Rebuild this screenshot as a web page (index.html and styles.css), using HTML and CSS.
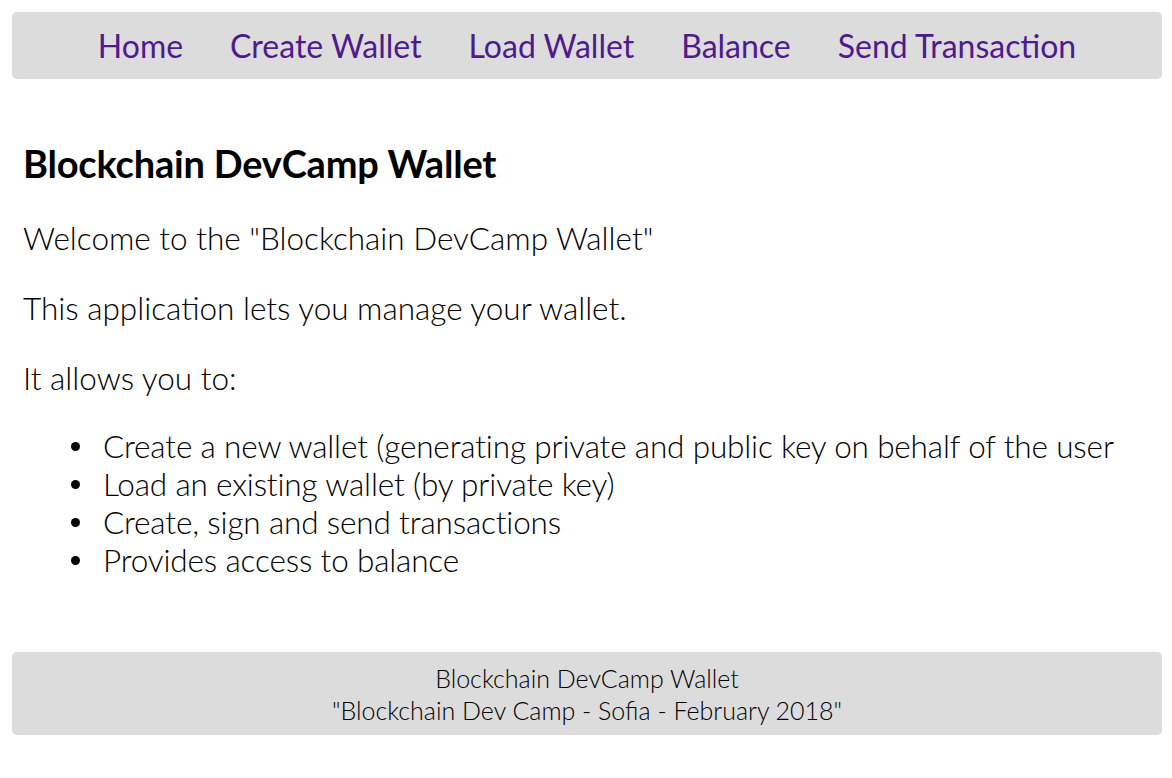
FILE: index.html
```html
<!DOCTYPE html>
<html>
<head>
<meta charset="utf-8">
<link rel="stylesheet" href="styles.css">
</head>
<body>
<nav class="nav">
  <a class="nav-link" href="#">Home</a>
  <a class="nav-link" href="#">Create Wallet</a>
  <a class="nav-link" href="#">Load Wallet</a>
  <a class="nav-link" href="#">Balance</a>
  <a class="nav-link" href="#">Send Transaction</a>
</nav>
<main class="content">
  <h1 class="title">Blockchain DevCamp Wallet</h1>
  <p class="text">Welcome to the "Blockchain DevCamp Wallet"</p>
  <p class="text">This application lets you manage your wallet.</p>
  <p class="text">It allows you to:</p>
  <ul class="list">
    <li class="item">Create a new wallet (generating private and public key on behalf of the user</li>
    <li class="item">Load an existing wallet (by private key)</li>
    <li class="item">Create, sign and send transactions</li>
    <li class="item">Provides access to balance</li>
  </ul>
</main>
<footer class="footer">
  <div>Blockchain DevCamp Wallet</div>
  <div>"Blockchain Dev Camp - Sofia - February 2018"</div>
</footer>
</body>
</html>
```
FILE: styles.css
```css
html, body {
  margin: 0;
  padding: 0;
  background: #fff;
}
body {
  padding: 12px 10px 0 12px;
  font-family: Lato, "Liberation Sans", sans-serif;
  color: #000;
}
.nav {
  background: #dcdcdc;
  border-radius: 5px;
  height: 67px;
  display: flex;
  justify-content: center;
  align-items: center;
  gap: 47px;
}
.nav-link {
  color: #4e1a8c;
  text-decoration: none;
  font-size: 32px;
  font-weight: 400;
}
.content {
  padding: 0 11px;
}
.title {
  font-size: 38px;
  font-weight: 700;
  margin: 62px 0 0 0;
  line-height: 44px;
  letter-spacing: -0.2px;
}
.text {
  font-size: 31.5px;
  font-weight: 300;
  line-height: 38px;
  margin: 32px 0 0 0;
}
.title + .text {
  margin-top: 34px;
}
.list {
  font-size: 31.5px;
  font-weight: 300;
  line-height: 38px;
  margin: 30px 0 0 0;
  padding-left: 80px;
  list-style: none;
}
.item {
  letter-spacing: -0.15px;
}
.item::before {
  content: "";
  display: inline-block;
  width: 9px;
  height: 9px;
  border-radius: 50%;
  background: #000;
  margin-left: -32px;
  margin-right: 23px;
  vertical-align: 7px;
}
.footer {
  margin-top: 73px;
  background: #dcdcdc;
  border-radius: 5px;
  height: 83px;
  display: flex;
  flex-direction: column;
  justify-content: center;
  align-items: center;
  font-size: 25px;
  font-weight: 300;
  line-height: 32px;
}
```
